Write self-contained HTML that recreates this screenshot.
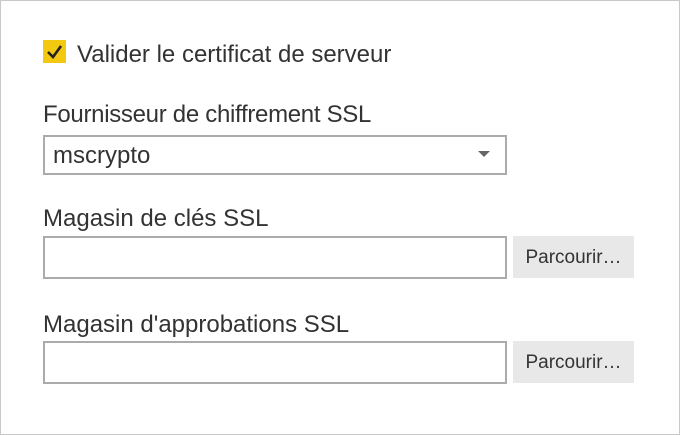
<!DOCTYPE html>
<html><head><meta charset="utf-8"><style>
html,body{margin:0;padding:0;}
body{width:680px;height:435px;position:relative;background:#fff;font-family:"Liberation Sans",sans-serif;color:#333;overflow:hidden;}
.frame{position:absolute;left:0;top:0;width:678px;height:433px;border:1px solid #c8c8c8;}
.a{position:absolute;white-space:nowrap;font-size:24px;line-height:28px;}
.box{position:absolute;border:2px solid #ababab;box-sizing:border-box;background:#fff;}
.btn{position:absolute;background:#e8e8e8;font-size:19px;line-height:44px;text-align:center;color:#333;}
</style></head><body>
<div class="frame"></div>
<div style="position:absolute;left:43px;top:40px;width:23px;height:23px;background:#f2c811;"></div>
<svg style="position:absolute;left:43px;top:40px" width="23" height="23"><path d="M5 12 L10 17 L18 6" stroke="#222" stroke-width="2.6" fill="none"/></svg>
<div class="a" style="left:77px;top:41px;">Valider le certificat de serveur</div>
<div class="a" style="left:43px;top:101px;letter-spacing:-0.3px;">Fournisseur de chiffrement SSL</div>
<div class="box" style="left:43px;top:135px;width:464px;height:40px;"></div>
<div class="a" style="left:53px;top:142px;">mscrypto</div>
<svg style="position:absolute;left:478px;top:151px" width="12" height="7"><path d="M0 0 L12 0 L6 6 Z" fill="#666"/></svg>
<div class="a" style="left:43px;top:205px;">Magasin de clés SSL</div>
<div class="box" style="left:43px;top:236px;width:464px;height:43px;"></div>
<div class="btn" style="left:513px;top:236px;width:121px;height:42px;">Parcourir…</div>
<div class="a" style="left:43px;top:311px;">Magasin d'approbations SSL</div>
<div class="box" style="left:43px;top:341px;width:464px;height:43px;"></div>
<div class="btn" style="left:513px;top:341px;width:121px;height:42px;">Parcourir…</div>
</body></html>
